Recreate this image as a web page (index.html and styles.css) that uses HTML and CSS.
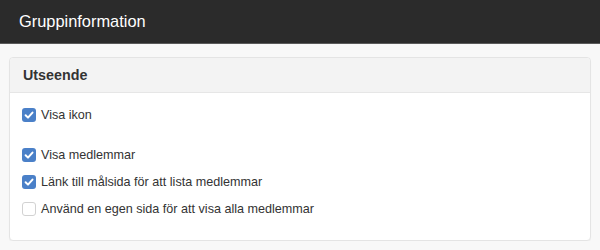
FILE: index.html
```html
<!DOCTYPE html>
<html>
<head>
  <title>Gruppinformation</title>
  <link rel="stylesheet" href="styles.css">
</head>
<body>
  <div class="topbar">
    <h1>Gruppinformation</h1>
  </div>

  <div class="panel">
    <div class="panel-heading">Utseende</div>
    <div class="panel-body">
      <label class="check-row">
        <span class="box checked"><svg viewBox="0 0 14 14" width="14" height="14"><path d="M3.6 7.3 L6 9.6 L10.5 4.6" fill="none" stroke="#fff" stroke-width="2" stroke-linecap="round" stroke-linejoin="round"/></svg></span>
        Visa ikon
      </label>
      <div class="spacer"></div>
      <label class="check-row">
        <span class="box checked"><svg viewBox="0 0 14 14" width="14" height="14"><path d="M3.6 7.3 L6 9.6 L10.5 4.6" fill="none" stroke="#fff" stroke-width="2" stroke-linecap="round" stroke-linejoin="round"/></svg></span>
        Visa medlemmar
      </label>
      <label class="check-row">
        <span class="box checked"><svg viewBox="0 0 14 14" width="14" height="14"><path d="M3.6 7.3 L6 9.6 L10.5 4.6" fill="none" stroke="#fff" stroke-width="2" stroke-linecap="round" stroke-linejoin="round"/></svg></span>
        Länk till målsida för att lista medlemmar
      </label>
      <label class="check-row">
        <span class="box"></span>
        Använd en egen sida för att visa alla medlemmar
      </label>
    </div>
  </div>
</body>
</html>
```

FILE: styles.css
```css
body {
  margin: 0;
  font-family: "Liberation Sans", Arial, sans-serif;
  color: #333;
  background-color: #f8f8f8;
}

.topbar {
  height: 43px;
  background-color: #2b2b2b;
  border-bottom: 1px solid #5a5a5a;
}

.topbar h1 {
  margin: 0;
  padding-left: 19px;
  font-size: 16.4px;
  font-weight: normal;
  line-height: 42px;
  color: #fff;
}

.panel {
  margin: 13px 9px 0 9px;
  background-color: #fff;
  border: 1px solid #e4e4e4;
  border-radius: 4px;
  box-shadow: 0 1px 1px rgba(0, 0, 0, 0.04);
}

.panel-heading {
  height: 34px;
  line-height: 34px;
  padding-left: 13px;
  font-size: 14.3px;
  font-weight: bold;
  color: #333;
  background-color: #f3f3f3;
  border-bottom: 1px solid #e6e6e6;
  border-radius: 4px 4px 0 0;
}

.panel-body {
  padding: 8px 12px 18px 12px;
}

.check-row {
  display: flex;
  align-items: center;
  gap: 5px;
  height: 27px;
  font-size: 12.6px;
}

.spacer {
  height: 13px;
}

.box {
  width: 14px;
  height: 14px;
  box-sizing: border-box;
  border: 1px solid #d2d2d2;
  border-radius: 3px;
  background-color: #fff;
  display: flex;
}

.box.checked {
  border: none;
  background-color: #4a80c8;
}
```
